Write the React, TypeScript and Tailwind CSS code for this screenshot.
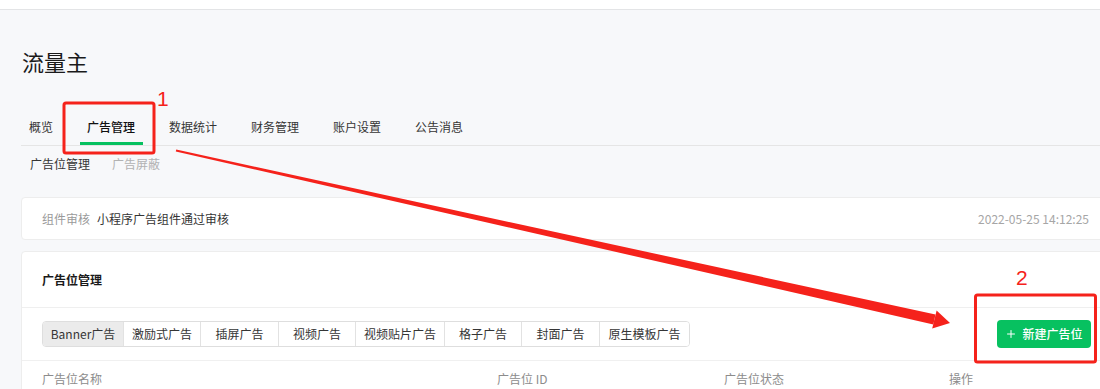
import { Plus } from "lucide-react";

const mainTabs = ["概览", "广告管理", "数据统计", "财务管理", "账户设置", "公告消息"];

const adTypes = [
  { label: "Banner广告", width: "w-[80px]" },
  { label: "激励式广告", width: "w-[77px]" },
  { label: "插屏广告", width: "w-[78px]" },
  { label: "视频广告", width: "w-[77px]" },
  { label: "视频贴片广告", width: "w-[89px]" },
  { label: "格子广告", width: "w-[77px]" },
  { label: "封面广告", width: "w-[78px]" },
  { label: "原生模板广告", width: "w-[90px]" },
];

const columns = ["广告位名称", "广告位 ID", "广告位状态", "操作"];

function Annotations() {
  return (
    <svg className="pointer-events-none absolute left-0 top-0" width="1100" height="389" viewBox="0 0 1100 389">
      <rect x="64" y="103" width="90" height="50" rx="2" fill="none" stroke="#f5221b" strokeWidth="3" />
      <rect x="975.5" y="295" width="120" height="67" rx="2" fill="none" stroke="#f5221b" strokeWidth="3" />
      <polygon points="176.2,149.6 935.5,314.6 933.3,324.4 175.8,151.4" fill="#f5221b" />
      <polygon points="950,323 936.6,310.5 932.2,328.5" fill="#f5221b" />
    </svg>
  );
}

export default function App() {
  return (
    <div
      className="relative h-[389px] w-[1100px] overflow-hidden bg-[#f7f8fa] text-[#333]"
      style={{ fontFamily: '"Noto Sans CJK SC", "Noto Sans", sans-serif' }}
    >
      <div className="h-[10px] border-b border-[#e3e4e6] bg-white" />

      <main className="w-[1131px] px-[21px]">
        <h1 className="mt-[36px] pl-px text-[22px] leading-[30px] font-normal text-[#1a1a1a]">流量主</h1>

        <nav className="mt-[32px] flex gap-[18px] border-b border-[#e5e5e5]">
          {mainTabs.map((tab) => {
            const active = tab === "广告管理";
            return (
              <div
                className={`relative px-[8px] pt-[10px] pb-[9px] text-[12px] leading-[18px] ${
                  active ? "font-medium text-[#111]" : "text-[#353535]"
                }`}
                key={tab}
              >
                {tab}
                {active ? <span className="absolute bottom-0 left-[1px] right-0 h-[3px] bg-[#07c160]" /> : null}
              </div>
            );
          })}
        </nav>

        <div className="mt-[9px] flex gap-[22px] pl-[9px] text-[12px] leading-[18px]">
          <span className="text-[#353535]">广告位管理</span>
          <span className="text-[#b2b2b2]">广告屏蔽</span>
        </div>

        <section className="mt-[24px] flex h-[43px] items-center justify-between rounded-[4px] border border-[#ededed] bg-white px-[20px] text-[12px]">
          <div className="flex gap-[7px]">
            <span className="text-[#9a9a9a]">组件审核</span>
            <span className="text-[#353535]">小程序广告组件通过审核</span>
          </div>
          <span className="text-[#a6a6a6]">2022-05-25 14:12:25</span>
        </section>

        <section className="mt-[11px] rounded-[4px] border border-[#ededed] bg-white">
          <div className="flex h-[56px] items-center border-b border-[#efefef] px-[20px]">
            <h2 className="text-[12px] font-bold text-[#1a1a1a]">广告位管理</h2>
          </div>

          <div className="flex h-[53px] items-center justify-between border-b border-[#f0f0f0] pl-[20px] pr-[18px]">
            <div className="flex h-[26px] overflow-hidden rounded-[4px] border border-[#dedede]">
              {adTypes.map((type, index) => (
                <div
                  className={`flex ${type.width} shrink-0 items-center justify-center whitespace-nowrap text-[12px] ${
                    index === 0 ? "bg-[#ebebeb] text-[#353535]" : "border-l border-[#e2e2e2] bg-white text-[#353535]"
                  }`}
                  key={type.label}
                >
                  {type.label}
                </div>
              ))}
            </div>
            <button
              className="inline-flex h-[28px] w-[94px] items-center justify-center gap-[5px] rounded-[4px] bg-[#07c160] text-[12px] font-medium text-white"
              type="button"
            >
              <Plus className="size-[12px]" strokeWidth={2} />
              新建广告位
            </button>
          </div>

          <div className="grid h-[36px] grid-cols-[455px_227px_225px_1fr] items-center px-[20px] text-[12px] text-[#8c8c8c]">
            {columns.map((column) => (
              <span key={column}>{column}</span>
            ))}
          </div>
          <div className="h-[40px]" />
        </section>
      </main>

      <Annotations />
      <span
        className="absolute left-[157px] top-[87px] text-[21px] leading-[24px] text-[#f5221b]"
        style={{ fontFamily: '"Liberation Sans", sans-serif' }}
      >
        1
      </span>
      <span
        className="absolute left-[1016px] top-[266px] text-[21px] leading-[24px] text-[#f5221b]"
        style={{ fontFamily: '"Liberation Sans", sans-serif' }}
      >
        2
      </span>
    </div>
  );
}
